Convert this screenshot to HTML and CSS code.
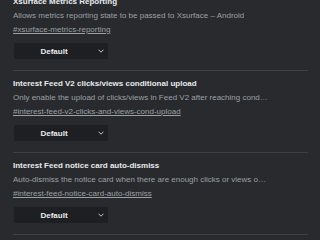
FILE: index.html
```html
<!DOCTYPE html>
<html>
<head>
<meta charset="utf-8">
<link rel="stylesheet" href="styles.css">
</head>
<body>
<div class="list">
  <div class="flag">
    <div class="title">Xsurface Metrics Reporting</div>
    <div class="desc">Allows metrics reporting state to be passed to Xsurface – Android</div>
    <a class="link" href="#">#xsurface-metrics-reporting</a>
    <div class="select"><span class="label">Default</span><svg class="chev" width="6" height="4" viewBox="0 0 6 4"><path d="M0.5 0.7 L3 3.2 L5.5 0.7" fill="none" stroke="#c4c7cb" stroke-width="1"/></svg></div>
  </div>
  <div class="flag">
    <div class="title">Interest Feed V2 clicks/views conditional upload</div>
    <div class="desc">Only enable the upload of clicks/views in Feed V2 after reaching conditions on the number of clicks or views – Android</div>
    <a class="link" href="#">#interest-feed-v2-clicks-and-views-cond-upload</a>
    <div class="select"><span class="label">Default</span><svg class="chev" width="6" height="4" viewBox="0 0 6 4"><path d="M0.5 0.7 L3 3.2 L5.5 0.7" fill="none" stroke="#c4c7cb" stroke-width="1"/></svg></div>
  </div>
  <div class="flag">
    <div class="title">Interest Feed notice card auto-dismiss</div>
    <div class="desc">Auto-dismiss the notice card when there are enough clicks or views on the notice card – Android</div>
    <a class="link" href="#">#interest-feed-notice-card-auto-dismiss</a>
    <div class="select"><span class="label">Default</span><svg class="chev" width="6" height="4" viewBox="0 0 6 4"><path d="M0.5 0.7 L3 3.2 L5.5 0.7" fill="none" stroke="#c4c7cb" stroke-width="1"/></svg></div>
  </div>
</div>
</body>
</html>
```

FILE: styles.css
```css
html, body {
  margin: 0;
  padding: 0;
  background: #292a2d;
  font-family: "Liberation Sans", Arial, sans-serif;
  overflow: hidden;
}
.list {
  margin-top: -11px;
  padding: 0 12px 0 13px;
}
.flag {
  display: flex;
  flex-direction: column;
  align-items: flex-start;
  padding: 6px 0 11px;
  border-bottom: 1px solid #3c4043;
}
.title {
  font-size: 8px;
  font-weight: bold;
  line-height: 14px;
  color: #e8eaed;
  white-space: nowrap;
}
.desc {
  font-size: 8px;
  line-height: 14px;
  color: #9aa0a6;
  white-space: nowrap;
  overflow: hidden;
  text-overflow: ellipsis;
  max-width: 256px;
}
.link {
  font-size: 8px;
  line-height: 13px;
  color: #9aa0a6;
  text-decoration: underline;
}
.select {
  margin-top: 7px;
  margin-left: 1px;
  width: 94px;
  height: 16px;
  background: #1e1f22;
  display: flex;
  align-items: center;
  position: relative;
}
.label {
  flex: 1;
  text-align: center;
  font-size: 8px;
  font-weight: bold;
  color: #e8eaed;
  padding-right: 4px;
}
.chev {
  margin-right: 4px;
}
```
